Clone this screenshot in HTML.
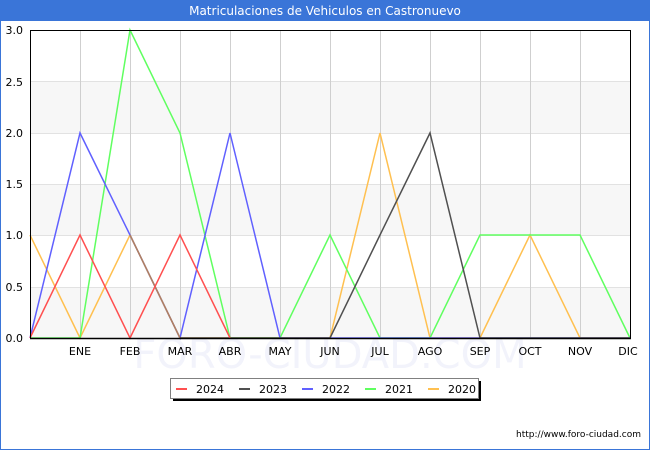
<!DOCTYPE html>
<html><head><meta charset="utf-8"><style>
body{margin:0;width:650px;height:450px;overflow:hidden;background:#fff;font-family:"DejaVu Sans","Liberation Sans",sans-serif}
</style></head><body>
<svg width="650" height="450" viewBox="0 0 650 450" xmlns="http://www.w3.org/2000/svg" font-family="DejaVu Sans, Liberation Sans, sans-serif">
<rect x="0.5" y="0.5" width="649" height="449" fill="#fff" stroke="#3a75d8"/>
<rect x="0" y="0" width="650" height="21" fill="#3a75d8"/>
<text x="325" y="15" text-anchor="middle" font-size="12" fill="#fff">Matriculaciones de Vehiculos en Castronuevo</text>
<g fill="#f7f7f7"><rect x="30" y="81" width="600" height="52"/><rect x="30" y="184" width="600" height="51"/><rect x="30" y="287" width="600" height="51"/></g>
<g stroke="#e2e2e2"><line x1="30" x2="630" y1="81.5" y2="81.5"/><line x1="30" x2="630" y1="133.5" y2="133.5"/><line x1="30" x2="630" y1="184.5" y2="184.5"/><line x1="30" x2="630" y1="235.5" y2="235.5"/><line x1="30" x2="630" y1="287.5" y2="287.5"/></g>
<g stroke="#cfcfcf"><line x1="80.5" x2="80.5" y1="30" y2="338"/><line x1="130.5" x2="130.5" y1="30" y2="338"/><line x1="180.5" x2="180.5" y1="30" y2="338"/><line x1="230.5" x2="230.5" y1="30" y2="338"/><line x1="280.5" x2="280.5" y1="30" y2="338"/><line x1="330.5" x2="330.5" y1="30" y2="338"/><line x1="380.5" x2="380.5" y1="30" y2="338"/><line x1="430.5" x2="430.5" y1="30" y2="338"/><line x1="480.5" x2="480.5" y1="30" y2="338"/><line x1="530.5" x2="530.5" y1="30" y2="338"/><line x1="580.5" x2="580.5" y1="30" y2="338"/></g>
<text x="330" y="368" text-anchor="middle" font-size="40" fill="#f2f3fb">FORO-CIUDAD.COM</text>
<g fill="none" stroke-width="1.5">
<polyline stroke="#ffc050" points="30,235 80,338 130,235 180,338 230,338 280,338 330,338 380,133 430,338 480,338 530,235 580,338 630,338"/>
<polyline stroke="#60ff60" points="30,338 80,338 130,30 180,133 230,338 280,338 330,235 380,338 430,338 480,235 530,235 580,235 630,338"/>
<polyline stroke="#6060ff" points="30,338 80,133 130,235 180,338 230,133 280,338 330,338 380,338 430,338 480,338 530,338 580,338 630,338"/>
<polyline stroke="#b08060" points="130,235 180,338"/>
<polyline stroke="#505050" points="180,338 330,338 380,235 430,133 480,338 630,338"/>
<polyline stroke="#ff5050" points="30,338 80,235 130,338 180,235 230,338"/>
</g>
<rect x="30.5" y="30.5" width="600" height="308" fill="none" stroke="#000"/>
<line x1="30" x2="631" y1="338.5" y2="338.5" stroke="#000" stroke-width="1.5"/>
<g font-size="11" fill="#000" text-anchor="end">
<text x="23" y="34">3.0</text><text x="23" y="86">2.5</text><text x="23" y="137">2.0</text><text x="23" y="188">1.5</text><text x="23" y="239">1.0</text><text x="23" y="291">0.5</text><text x="23" y="342">0.0</text>
</g>
<g font-size="11" fill="#000" text-anchor="middle">
<text x="80" y="355">ENE</text><text x="130" y="355">FEB</text><text x="180" y="355">MAR</text><text x="230" y="355">ABR</text><text x="280" y="355">MAY</text><text x="330" y="355">JUN</text><text x="380" y="355">JUL</text><text x="430" y="355">AGO</text><text x="480" y="355">SEP</text><text x="530" y="355">OCT</text><text x="580" y="355">NOV</text><text x="628" y="355">DIC</text>
</g>
<rect x="173" y="381" width="308" height="20" fill="#000"/>
<rect x="170.5" y="378.5" width="308" height="20" fill="#fff" stroke="#808080"/>
<g stroke-width="2"><line x1="176" x2="187" y1="389" y2="389" stroke="#ff5050"/><line x1="239" x2="250" y1="389" y2="389" stroke="#505050"/><line x1="302" x2="313" y1="389" y2="389" stroke="#6060ff"/><line x1="365" x2="376" y1="389" y2="389" stroke="#60ff60"/><line x1="428" x2="439" y1="389" y2="389" stroke="#ffc050"/></g>
<g font-size="11" fill="#000"><text x="196" y="393">2024</text><text x="259" y="393">2023</text><text x="322" y="393">2022</text><text x="385" y="393">2021</text><text x="448" y="393">2020</text></g>
<text x="641" y="437" text-anchor="end" font-size="9" fill="#000">http://www.foro-ciudad.com</text>
</svg>
</body></html>
